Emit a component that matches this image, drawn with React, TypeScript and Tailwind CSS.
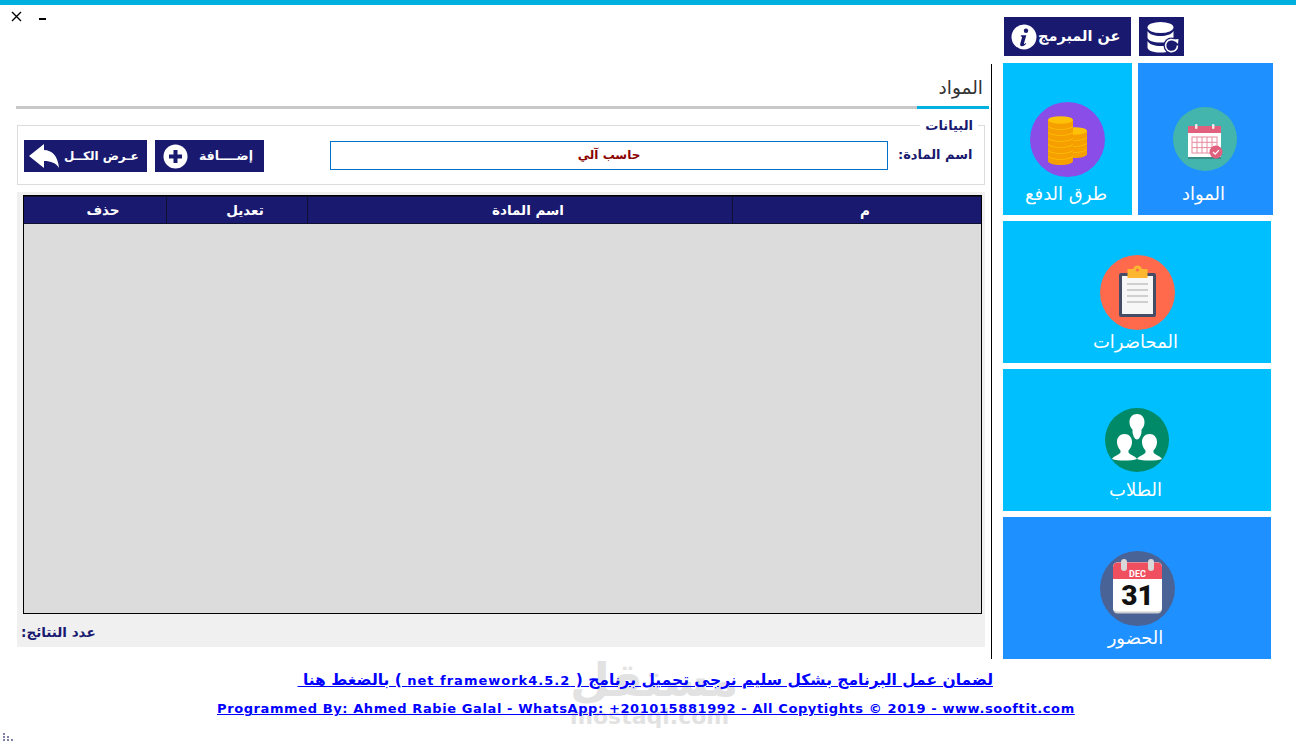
const FONT = "font-['DejaVu_Sans','Noto_Sans',sans-serif]";

const DbIcon = () => (
  <svg width="38" height="36" viewBox="-1.500 -2 38 36">
    <g fill="#fff">
      <ellipse cx="16" cy="6.500" rx="13" ry="5.500" />
      <path d="M3 10c2 3.600 7 5 13 5s11-1.400 13-5v6.500c0 3-6 5-13 5s-13-2-13-5z" />
      <path d="M3 20c2 3.600 7 5 13 5s11-1.400 13-5v6.500c0 3-6 5-13 5s-13-2-13-5z" />
    </g>
    <circle cx="27" cy="24.500" r="8" fill="#191970" />
    <path d="M31.200 20.300A6 6 0 1 0 33 24.500" fill="none" stroke="#fff" strokeWidth="1.600" />
    <path d="M29 18.500l5-.5-.5 5z" fill="#fff" />
  </svg>
);

const InfoIcon = () => (
  <svg width="26" height="26" viewBox="0 0 26 26">
    <circle cx="13" cy="13" r="12.500" fill="#fff" />
    <circle cx="15" cy="6.800" r="2.200" fill="#191970" />
    <path d="M10 11.300h5.300l-2.300 8c-.2.800.5 1 1.800-.2l.5.500c-1.500 2-2.800 2.700-4.300 2.700-1.600 0-2.200-1-1.700-2.700l1.700-6c.2-.8-.2-1-1.300-1z" fill="#191970" />
  </svg>
);

const PlusIcon = () => (
  <svg width="25" height="25" viewBox="0 0 25 25">
    <circle cx="12.500" cy="12.500" r="12" fill="#fff" />
    <path d="M10.500 6h4v4.500H19v4h-4.500V19h-4v-4.500H6v-4h4.500z" fill="#191970" />
  </svg>
);

const BackIcon = () => (
  <svg width="30" height="24" viewBox="0 0 30 24">
    <path d="M0 12L15 0v6c8 0 14 6 15 18-3-5-8-7-15-7v7z" fill="#fff" />
  </svg>
);

const CoinStack = ({ x, y, rows, width }: { x: number; y: number; rows: number; width: number }) => (
  <g>
    {Array.from({ length: rows }).map((_, i) => {
      const top = y + (rows - 1 - i) * 6;
      const half = width / 2;
      return (
        <g key={i}>
          <path d={`M${x} ${top}v5c0 2.500 ${half / 2} 4 ${half} 4s${half} -1.500 ${half} -4v-5z`} fill="#f59f00" />
          <ellipse cx={x + half} cy={top} rx={half} ry="3.800" fill="#ffc107" />
        </g>
      );
    })}
  </g>
);

const CoinsIcon = () => (
  <svg width="75" height="75" viewBox="0 0 75 75">
    <circle cx="37.500" cy="37.500" r="37.500" fill="#8a4de8" />
    <CoinStack x={32} y={29} rows={4} width={25} />
    <CoinStack x={18} y={18} rows={7} width={25} />
  </svg>
);

const CalendarCheckIcon = () => (
  <svg width="64" height="64" viewBox="0 0 64 64">
    <circle cx="32" cy="32" r="32" fill="#43b5ac" />
    <rect x="15" y="19" width="33" height="32" fill="#fff" />
    <rect x="15" y="50" width="33" height="2" fill="#3b8f88" />
    <rect x="15" y="19" width="33" height="7" fill="#e0607e" />
    <rect x="22" y="17" width="2.500" height="5" rx="1" fill="#f5e6e8" />
    <rect x="39" y="17" width="2.500" height="5" rx="1" fill="#f5e6e8" />
    <g stroke="#e78a9e" strokeWidth="1" fill="none">
      <rect x="19" y="30" width="25" height="16" />
      <path d="M24 30v16M29 30v16M34 30v16M39 30v16M19 35.300h25M19 40.600h25" />
    </g>
    <circle cx="43" cy="45" r="6.500" fill="#e0607e" />
    <path d="M40 45l2.200 2.200 3.800-4" fill="none" stroke="#fff" strokeWidth="1.200" />
  </svg>
);

const ClipboardIcon = () => (
  <svg width="75" height="75" viewBox="0 0 75 75">
    <circle cx="37.500" cy="37.500" r="37.500" fill="#ff6a4d" />
    <rect x="19" y="18" width="37" height="44" rx="2" fill="#454d66" />
    <rect x="22" y="21" width="31" height="38" fill="#f7f7f7" />
    <path d="M27 29h21M27 35h21M27 41h21M27 47h21" stroke="#cfcfcf" strokeWidth="2" />
    <rect x="27.500" y="14" width="20" height="9" fill="#fdb62f" />
    <path d="M33 15a4.500 4.500 0 0 1 9 0z" fill="#fdb62f" />
    <circle cx="37.500" cy="15" r="1.500" fill="#ff6a4d" />
  </svg>
);

const Person = ({ cx, cy }: { cx: number; cy: number }) => (
  <path
    d={`M${cx} ${cy - 14}c4.500 0 7.500 3.500 7.500 8 0 3.500-1.500 6.500-3.500 8.500v2c1 2 7 3.500 8.500 6.500-3 1-7.500 1.500-12.500 1.500s-9.500-.5-12.500-1.500c1.500-3 7.500-4.500 8.500-6.500v-2c-2-2-3.500-5-3.500-8.500 0-4.500 3-8 7.500-8z`}
    fill="#fff"
  />
);

const UsersIcon = () => (
  <svg width="64" height="64" viewBox="0 0 64 64">
    <circle cx="32" cy="32" r="32" fill="#008a68" />
    <path d="M32 6c4.500 0 7.500 3.500 7.500 8 0 3-1 5.500-3 7.500v2c0 3-2 8-4.500 8s-4.500-5-4.500-8v-2c-2-2-3-4.500-3-7.500 0-4.500 3-8 7.500-8z" fill="#fff" />
    <Person cx={19.500} cy={40} />
    <Person cx={44.500} cy={40} />
  </svg>
);

const DateIcon = () => (
  <svg width="75" height="75" viewBox="0 0 75 75">
    <circle cx="37.500" cy="37.500" r="37.500" fill="#4a6396" />
    <path d="M13 16c0-2.500 2-4.500 4.500-4.500h40c2.500 0 4.500 2 4.500 4.500v42c0 2.500-2 4.500-4.500 4.500h-40c-2.500 0-4.500-2-4.500-4.500z" fill="#cfcfcf" />
    <path d="M13 16c0-2.500 2-4.500 4.500-4.500h40c2.500 0 4.500 2 4.500 4.500v41c0 2.500-2 3.500-4.500 3.500h-40c-2.500 0-4.500-1-4.500-3.500z" fill="#fff" />
    <path d="M13 16c0-2.500 2-4.500 4.500-4.500h40c2.500 0 4.500 2 4.500 4.500v12H13z" fill="#ef4f5f" />
    <rect x="21" y="8" width="6" height="12" rx="3" fill="#d9d9d9" />
    <rect x="48" y="8" width="6" height="12" rx="3" fill="#d9d9d9" />
    <text x="37.500" y="26" textAnchor="middle" fontSize="9" fontWeight="700" fill="#fff" fontFamily="Roboto, sans-serif">DEC</text>
    <text x="37.500" y="54" textAnchor="middle" fontSize="28" fontWeight="900" fill="#111" fontFamily="Roboto, sans-serif">31</text>
  </svg>
);

const Tile = ({ label, color, className, icon }: { label: string; color: string; className: string; icon: React.ReactNode }) => (
  <div className={`${color} ${className} relative flex flex-col items-center text-white`}>
    {icon}
    <span className="absolute bottom-[9px] pr-[3px] text-[18px] leading-[24px]">{label}</span>
  </div>
);

const NavyButton = ({ label, className, icon }: { label: string; className: string; icon: React.ReactNode }) => (
  <div className={`${className} h-8 bg-[#191970] text-white flex items-center font-bold`}>
    {icon}
    <span dir="rtl" className="whitespace-nowrap">{label}</span>
  </div>
);

const Heading = ({ label, width }: { label: string; width: string }) => (
  <div className={`${width} flex items-center justify-center pl-4 border-r border-[#101030] last:border-r-0 text-white text-[13.500px] font-bold`}>
    {label}
  </div>
);

export default function App() {
  return (
    <div className={`${FONT} relative w-[1296px] h-[747px] overflow-hidden bg-white`}>
      <div className="h-[5px] bg-[#00b0de]" />

      <div className="flex pl-4 pr-6">
        <div className="w-[976px] shrink-0">
          {/* window controls */}
          <div className="h-[59px] flex items-start gap-[17px] -ml-[5px] pt-[5px] text-black">
            <svg width="11" height="11" viewBox="0 0 11 11" className="mt-[1px]">
              <path d="M1 1l9 9M10 1l-9 9" stroke="#000" strokeWidth="1.400" />
            </svg>
            <div className="w-[7px] h-[2px] bg-black mt-[8px]" />
          </div>

          <div className="h-[595px] border-r border-black pr-[1px] w-[976px]">
            {/* tab header */}
            <div className="h-[45px] flex flex-col justify-end">
              <div className="pr-[7px] text-right text-[18.500px] leading-[24px] text-[#333] pb-[6px]">المواد</div>
              <div className="flex h-[3px]">
                <div className="w-[901px] bg-[#c8c8c8]" />
                <div className="w-[72px] bg-[#00b0de]" />
              </div>
            </div>

            {/* data group */}
            <div className="relative ml-[1px] mt-[16px] w-[968px] h-[60px] border border-[#dcdcdc] flex items-center">
              <span className="absolute -top-[8px] right-[6px] bg-white px-[5px] text-[13px] leading-[16px] font-bold text-[#191970]">البيانات</span>
              <div className="flex items-center gap-2 ml-[6px] mt-[2px]">
                <NavyButton label="عـرض الكــل" className="w-[123px] pl-[5px] gap-[5px] text-[12px]" icon={<BackIcon />} />
                <NavyButton label="إضــــافة" className="w-[109px] pl-[8px] gap-[11px] text-[12.500px]" icon={<PlusIcon />} />
              </div>
              <div className="ml-[66px] w-[558px] h-[29px] border border-[#0070c8] flex items-center justify-center text-[12px] font-bold text-[#8b0000]">
                حاسب آلي
              </div>
              <span className="ml-[10px] text-[13px] font-bold text-[#191970] whitespace-nowrap" dir="rtl">اسم المادة:</span>
            </div>

            {/* grid */}
            <div className="ml-[1px] mt-[7px] w-[968px] h-[455px] bg-[#f0f0f0] pt-[3px] px-[6px]">
              <div className="h-[419px] w-[959px] border border-black bg-[#dcdcdc]">
                <div className="h-[28px] flex bg-[#191970] border-y border-[#101030]">
                  <Heading label="حذف" width="w-[143px]" />
                  <Heading label="تعديل" width="w-[141px]" />
                  <Heading label="اسم المادة" width="w-[425px]" />
                  <Heading label="م" width="w-[248px]" />
                </div>
              </div>
              <div className="mt-[9px] -ml-[2px] text-[13.500px] leading-[18px] font-bold text-[#191970]">
                <span dir="rtl" className="block w-fit">عدد النتائج:</span>
              </div>
            </div>
          </div>
        </div>

        {/* side menu */}
        <div className="ml-[11px] w-[270px] shrink-0">
          <div className="h-[58px] pt-[12px] pl-[1px] flex gap-2">
            <div className="w-[127px] h-[39px] bg-[#191970] text-white flex items-center pl-[7px] gap-[1px] text-[14.500px] font-bold">
              <InfoIcon />
              <span className="whitespace-nowrap">عن المبرمج</span>
            </div>
            <div className="w-[45px] h-[39px] bg-[#191970] flex items-center justify-center">
              <DbIcon />
            </div>
          </div>
          <div className="flex flex-col gap-[6px]">
            <div className="flex gap-[6px]">
              <Tile label="طرق الدفع" color="bg-[#00bfff]" className="w-[129px] h-[152px] pt-[39px]" icon={<CoinsIcon />} />
              <Tile label="المواد" color="bg-[#1e90ff]" className="w-[135px] h-[152px] pt-[44px] pr-[1px]" icon={<CalendarCheckIcon />} />
            </div>
            <Tile label="المحاضرات" color="bg-[#00bfff]" className="w-[268px] h-[142px] pt-[34px]" icon={<ClipboardIcon />} />
            <Tile label="الطلاب" color="bg-[#00bfff]" className="w-[268px] h-[142px] pt-[39px]" icon={<UsersIcon />} />
            <Tile label="الحضور" color="bg-[#1e90ff]" className="w-[268px] h-[142px] pt-[34px]" icon={<DateIcon />} />
          </div>
        </div>
      </div>

      {/* watermark behind the footer */}
      <div className="absolute left-[570px] top-[657px] w-[157px] text-center text-[#e2e2e2] pointer-events-none">
        <div className="text-[46px] leading-[46px] font-bold">مستقل</div>
        <div className="text-[22px] leading-[28px] font-bold">mostaql.com</div>
      </div>

      {/* footer links */}
      <div className="relative z-10 mt-[10px] text-[#0000ff]">
        <div className="pl-[300px] h-[22px]">
          <span className="underline block w-[693px] text-right whitespace-nowrap text-[15.500px] leading-[22px] font-bold" dir="rtl">
            لضمان عمل البرنامج بشكل سليم نرجى تحميل برنامج ( <span className="text-[13px] tracking-[1px]">net framework4.5.2</span> ) بالضغط هنا&nbsp;
          </span>
        </div>
        <div className="pl-[217px] mt-[7px] text-[13px] leading-[22px] font-bold tracking-[0.6px]">
          <span className="underline whitespace-nowrap">
            Programmed By: Ahmed Rabie Galal - WhatsApp: +201015881992 - All Copytights © 2019 - www.sooftit.com
          </span>
        </div>
      </div>

      {/* resize grip */}
      <div className="absolute left-[3px] top-[733px] grid grid-cols-3 gap-[1px] w-[11px]">
        <i className="w-[2px] h-[2px] bg-[#8080a8]" />
        <i />
        <i />
        <i className="w-[2px] h-[2px] bg-[#8080a8]" />
        <i className="w-[2px] h-[2px] bg-[#8080a8]" />
        <i />
        <i className="w-[2px] h-[2px] bg-[#8080a8]" />
        <i className="w-[2px] h-[2px] bg-[#8080a8]" />
        <i className="w-[2px] h-[2px] bg-[#8080a8]" />
      </div>
    </div>
  );
}
